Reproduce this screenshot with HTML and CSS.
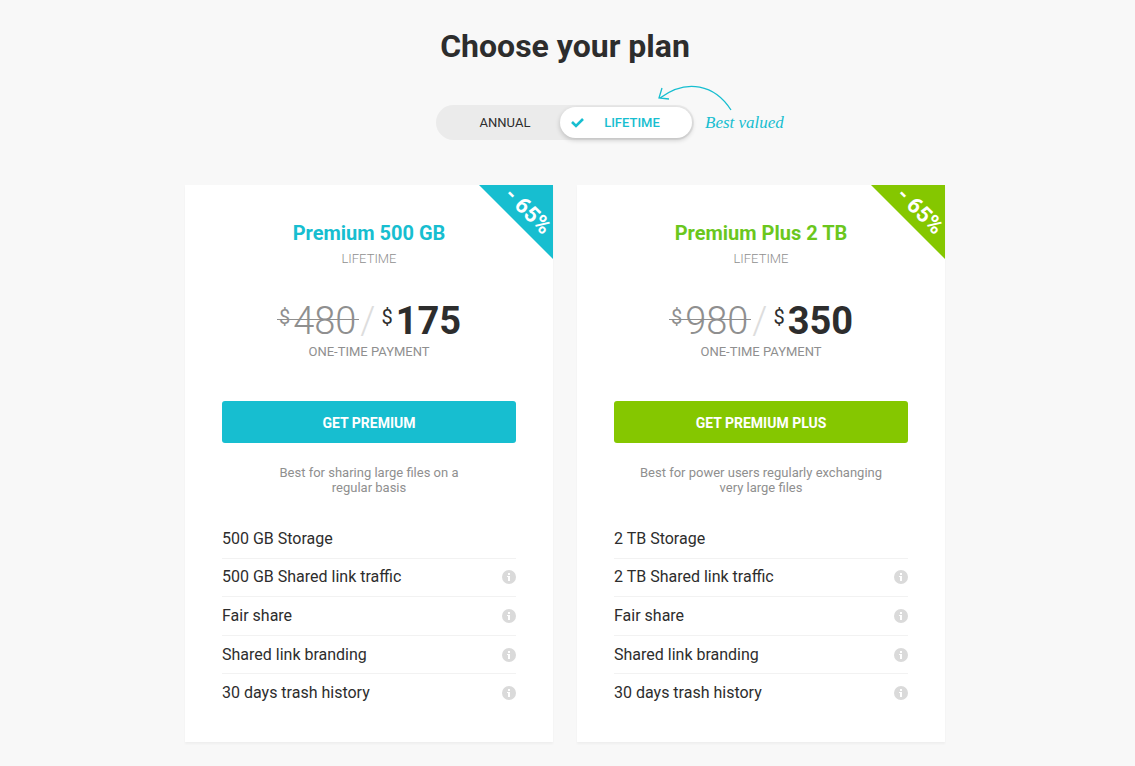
FILE: index.html
```html
<!DOCTYPE html>
<html lang="en">
<head>
    <meta charset="UTF-8">
    <meta name="viewport" content="width=device-width, initial-scale=1.0">
    <title>Choose your plan</title>
    <link rel="stylesheet" href="styles.css">
</head>
<body>
    <svg class="sprite" aria-hidden="true">
        <symbol id="info" viewBox="0 0 14 14">
            <circle cx="7" cy="7" r="7" fill="#dadada"/>
            <path d="M6 3h2v2H6zM5 6h3v5H6V7H5z" fill="#fff"/>
        </symbol>
    </svg>

    <main class="page">
        <h1>Choose your plan</h1>

        <form class="period">
            <div class="toggle">
                <input type="radio" name="period" id="annual">
                <label for="annual">ANNUAL</label>
                <input type="radio" name="period" id="lifetime" checked>
                <label for="lifetime">
                    <svg class="check" viewBox="0 0 14 12" aria-hidden="true"><path d="M2 5l4 4 7-7" fill="none" stroke="currentColor" stroke-width="2.6"/></svg>
                    LIFETIME
                </label>
            </div>
            <div class="hint">
                <svg class="arrow" viewBox="0 0 76 28" aria-hidden="true"><path d="M74 26C58 1 30-6 3 14M5 4L2 14l10 1" fill="none" stroke="currentColor" stroke-width="1.3"/></svg>
                <span>Best valued</span>
            </div>
        </form>

        <div class="plans">
            <section class="card premium">
                <div class="ribbon"><span>- 65%</span></div>
                <h2>Premium 500 GB</h2>
                <p class="term">LIFETIME</p>
                <div class="price">
                    <del><sup>$</sup>480</del>
                    <span class="slash">/</span>
                    <strong><sup>$</sup>175</strong>
                </div>
                <p class="payment">ONE-TIME PAYMENT</p>
                <button type="button">GET PREMIUM</button>
                <p class="about">Best for sharing large files on a<br>regular basis</p>
                <ul>
                    <li>500 GB Storage</li>
                    <li>500 GB Shared link traffic <svg class="info"><use href="#info"/></svg></li>
                    <li>Fair share <svg class="info"><use href="#info"/></svg></li>
                    <li>Shared link branding <svg class="info"><use href="#info"/></svg></li>
                    <li>30 days trash history <svg class="info"><use href="#info"/></svg></li>
                </ul>
            </section>

            <section class="card plus">
                <div class="ribbon"><span>- 65%</span></div>
                <h2>Premium Plus 2 TB</h2>
                <p class="term">LIFETIME</p>
                <div class="price">
                    <del><sup>$</sup>980</del>
                    <span class="slash">/</span>
                    <strong><sup>$</sup>350</strong>
                </div>
                <p class="payment">ONE-TIME PAYMENT</p>
                <button type="button">GET PREMIUM PLUS</button>
                <p class="about">Best for power users regularly exchanging<br>very large files</p>
                <ul>
                    <li>2 TB Storage</li>
                    <li>2 TB Shared link traffic <svg class="info"><use href="#info"/></svg></li>
                    <li>Fair share <svg class="info"><use href="#info"/></svg></li>
                    <li>Shared link branding <svg class="info"><use href="#info"/></svg></li>
                    <li>30 days trash history <svg class="info"><use href="#info"/></svg></li>
                </ul>
            </section>
        </div>
    </main>
</body>
</html>
```
FILE: styles.css
```css
* {
    box-sizing: border-box;
}
body {
    margin: 0;
    padding-right: 5px;
    font-family: Roboto, Arial, sans-serif;
    color: #2d2d2d;
    background-color: #f8f8f8;
}
.sprite {
    display: none;
}
.page {
    max-width: 760px;
    margin: 0 auto;
    padding: 26px 0 24px;
}
h1 {
    margin: 0;
    font-size: 32px;
    line-height: 40px;
    font-weight: 700;
    text-align: center;
}
.period {
    position: relative;
    width: 258px;
    margin: 39px auto 45px;
}
.toggle {
    display: flex;
    padding: 2px;
    border-radius: 18px;
    background-color: #ebebeb;
    font-size: 13px;
}
.toggle input {
    position: absolute;
    opacity: 0;
}
.toggle label {
    position: relative;
    flex: 1;
    padding-left: 12px;
    border-radius: 16px;
    line-height: 31px;
    text-align: center;
    cursor: pointer;
}
.toggle input:checked + label {
    color: #17bed0;
    background-color: #fff;
    box-shadow: 0 2px 5px rgba(0, 0, 0, 0.2);
    font-weight: 500;
}
.toggle label[for="lifetime"] {
    flex: 0 0 132px;
}
.check {
    position: absolute;
    top: 10px;
    left: 10px;
    width: 14px;
    height: 12px;
}
.hint {
    position: absolute;
    top: 8px;
    left: 269px;
    color: #17bed0;
    font-family: "Segoe Script", "Liberation Serif", serif;
    font-size: 17px;
    line-height: 20px;
    font-style: italic;
    white-space: nowrap;
}
.arrow {
    position: absolute;
    top: -29px;
    left: -48px;
    width: 76px;
    height: 28px;
}
.plans {
    display: grid;
    grid-template-columns: 1fr 1fr;
    gap: 24px;
}
.card {
    position: relative;
    padding: 36px 37px 29px;
    background-color: #fff;
    box-shadow: 0 2px 2px rgba(0, 0, 0, 0.04);
    text-align: center;
}
.premium {
    --color: #17bed0;
    --title: #17bed0;
}
.plus {
    --color: #85c700;
    --title: #6bc71d;
}
.ribbon {
    position: absolute;
    top: 0;
    right: 0;
    width: 74px;
    height: 74px;
    background-color: var(--color);
    clip-path: polygon(0 0, 100% 0, 100% 100%);
    color: #fff;
    font-size: 22px;
    line-height: 24px;
    font-weight: 700;
}
.ribbon span {
    position: absolute;
    top: 14px;
    left: 19px;
    width: 60px;
    transform: rotate(45deg);
}
h2 {
    margin: 0;
    color: var(--title);
    font-size: 20px;
    line-height: 24px;
    font-weight: 700;
}
.card p {
    margin: 0;
    color: #8f8f8f;
    font-size: 13px;
    line-height: 15px;
}
.card .term {
    margin-top: 6px;
    font-weight: 300;
}
.price {
    display: flex;
    justify-content: center;
    margin-top: 32px;
    font-size: 38px;
    line-height: 46px;
}
.price sup {
    margin-right: 3px;
    font-size: 20px;
    line-height: 20px;
    font-weight: 400;
    vertical-align: 10px;
}
.price del {
    position: relative;
    padding: 0 3px 0 2px;
    color: #8f8f8f;
    font-weight: 300;
    text-decoration: none;
}
.price del::after {
    content: "";
    position: absolute;
    top: 21px;
    left: 0;
    right: 0;
    border-top: 1px solid #8f8f8f;
}
.slash {
    padding: 0 6px 0 1px;
    color: #ddd;
    font-weight: 300;
}
button {
    width: 100%;
    height: 42px;
    margin-top: 42px;
    padding-top: 2px;
    border: none;
    border-radius: 3px;
    color: #fff;
    background-color: var(--color);
    font-family: inherit;
    font-size: 14px;
    font-weight: 700;
    cursor: pointer;
}
.card .about {
    margin-top: 22px;
}
ul {
    display: grid;
    grid-auto-rows: 1fr;
    min-height: 193px;
    margin: 25px 0 0;
    padding: 0;
    list-style: none;
}
li {
    display: flex;
    align-items: center;
    justify-content: space-between;
    border-bottom: 1px solid #f2f2f2;
    font-size: 16px;
    line-height: 20px;
    text-align: left;
}
li:last-child {
    border-bottom-color: transparent;
}
.info {
    width: 14px;
    height: 14px;
}
```
